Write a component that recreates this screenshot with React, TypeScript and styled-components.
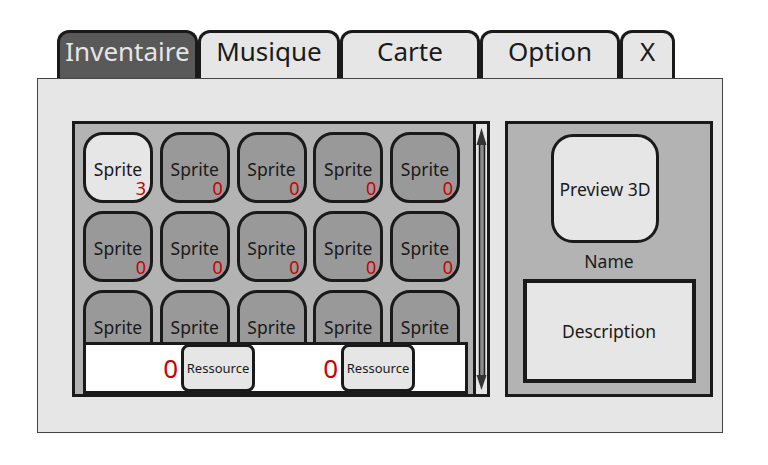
import styled, { createGlobalStyle } from 'styled-components';

const INK = '#1a1a1a';
const LIGHT = '#e6e6e6';
const RED = '#cc0000';

const GlobalStyle = createGlobalStyle`
  html, body {
    margin: 0;
    padding: 0;
    background: #ffffff;
    font-family: "Noto Sans", "Open Sans", sans-serif;
    color: ${INK};
  }
`;

const Page = styled.div`
  width: 768px;
  height: 465px;
  padding: 30px 0 0 37px;
  box-sizing: border-box;
`;

const TabBar = styled.div`
  display: flex;
  padding-left: 20px;
  height: 48px;
`;

const Tab = styled.div<{ $active?: boolean; $width: number }>`
  width: ${p => p.$width}px;
  box-sizing: border-box;
  border: 3px solid ${INK};
  border-bottom: none;
  border-radius: 12px 12px 0 0;
  background: ${p => (p.$active ? '#595959' : LIGHT)};
  color: ${p => (p.$active ? LIGHT : INK)};
  font-size: 26px;
  line-height: 30px;
  padding-top: 3px;
  text-align: center;
`;

const Panel = styled.div`
  width: 686px;
  height: 355px;
  box-sizing: border-box;
  border: 1px solid #444;
  background: ${LIGHT};
  padding: 42px 0 0 34px;
  display: flex;
  gap: 15px;
`;

const Inventory = styled.div`
  width: 418px;
  height: 276px;
  box-sizing: border-box;
  border: 3px solid ${INK};
  background: #b3b3b3;
  display: flex;
`;

const InventoryMain = styled.div`
  flex: 1;
  display: flex;
  flex-direction: column;
`;

const SpriteGrid = styled.div`
  height: 218px;
  box-sizing: border-box;
  overflow: hidden;
  padding: 8px 0 0 8px;
  display: grid;
  grid-template-columns: repeat(5, 70px);
  grid-auto-rows: 71px;
  column-gap: 6.75px;
  row-gap: 8px;
`;

const SpriteCell = styled.div<{ $selected?: boolean }>`
  box-sizing: border-box;
  border: 3px solid ${INK};
  border-radius: 20px;
  background: ${p => (p.$selected ? LIGHT : '#999999')};
  padding-top: 25px;
  display: flex;
  flex-direction: column;
`;

const SpriteLabel = styled.div`
  font-size: 17.5px;
  line-height: 18px;
  text-align: center;
`;

const SpriteCount = styled.div`
  margin-top: 2px;
  font-size: 18px;
  line-height: 17px;
  text-align: right;
  padding-right: 4px;
  color: ${RED};
`;

const ResourceBar = styled.div`
  height: 52px;
  margin: 0 5px 0 8px;
  box-sizing: border-box;
  border: 3px solid ${INK};
  background: #ffffff;
  padding-left: 9px;
  display: flex;
  align-items: center;
`;

const ResourceGroup = styled.div`
  width: 160px;
  display: flex;
  justify-content: flex-end;
  align-items: center;
  gap: 3px;
`;

const ResourceAmount = styled.span`
  font-size: 26px;
  color: ${RED};
`;

const ResourceButton = styled.div`
  width: 74px;
  height: 48px;
  flex-shrink: 0;
  box-sizing: border-box;
  border: 3px solid ${INK};
  border-radius: 8px;
  background: ${LIGHT};
  font-size: 13px;
  display: flex;
  align-items: center;
  justify-content: center;
`;

const ScrollTrack = styled.div`
  width: 14px;
  box-sizing: border-box;
  border-left: 3px solid ${INK};
  background: ${LIGHT};
  display: flex;
`;

const Details = styled.div`
  width: 208px;
  height: 276px;
  box-sizing: border-box;
  border: 3px solid ${INK};
  background: #b3b3b3;
  display: flex;
  flex-direction: column;
  align-items: center;
  padding-top: 10px;
`;

const Preview = styled.div`
  width: 108px;
  height: 109px;
  margin-right: 8px;
  box-sizing: border-box;
  border: 3px solid ${INK};
  border-radius: 22px;
  background: ${LIGHT};
  font-size: 17.5px;
  display: flex;
  align-items: center;
  justify-content: center;
`;

const ItemName = styled.div`
  margin-top: 8px;
  font-size: 17.5px;
  line-height: 20px;
`;

const Description = styled.div`
  margin-top: 8px;
  width: 173px;
  height: 104px;
  box-sizing: border-box;
  border: 4px solid ${INK};
  background: ${LIGHT};
  font-size: 17.5px;
  display: flex;
  align-items: center;
  justify-content: center;
`;

const tabs = [
  { label: 'Inventaire', width: 141 },
  { label: 'Musique', width: 142 },
  { label: 'Carte', width: 140 },
  { label: 'Option', width: 140 },
  { label: 'X', width: 55 },
];

const sprites = Array.from({ length: 15 }, (_, i) => ({
  count: i === 0 ? 3 : 0,
  showCount: i < 10,
}));

function ScrollArrows() {
  return (
    <svg width="11" height="270" viewBox="0 0 11 270">
      <rect x="3.5" y="18" width="5" height="236" fill="#8c8c8c" stroke={INK} strokeWidth="1.5" />
      <polygon points="5.5,4 0.5,21 10.5,21" fill="#333" />
      <polygon points="5.5,266 0.5,251 10.5,251" fill="#333" />
    </svg>
  );
}

export default function App() {
  return (
    <Page>
      <GlobalStyle />
      <TabBar>
        {tabs.map((t, i) => (
          <Tab key={t.label} $active={i === 0} $width={t.width}>
            {t.label}
          </Tab>
        ))}
      </TabBar>
      <Panel>
        <Inventory>
          <InventoryMain>
            <SpriteGrid>
              {sprites.map((s, i) => (
                <SpriteCell key={i} $selected={i === 0}>
                  <SpriteLabel>Sprite</SpriteLabel>
                  {s.showCount && <SpriteCount>{s.count}</SpriteCount>}
                </SpriteCell>
              ))}
            </SpriteGrid>
            <ResourceBar>
              <ResourceGroup>
                <ResourceAmount>0</ResourceAmount>
                <ResourceButton>Ressource</ResourceButton>
              </ResourceGroup>
              <ResourceGroup>
                <ResourceAmount>0</ResourceAmount>
                <ResourceButton>Ressource</ResourceButton>
              </ResourceGroup>
            </ResourceBar>
          </InventoryMain>
          <ScrollTrack>
            <ScrollArrows />
          </ScrollTrack>
        </Inventory>
        <Details>
          <Preview>Preview 3D</Preview>
          <ItemName>Name</ItemName>
          <Description>Description</Description>
        </Details>
      </Panel>
    </Page>
  );
}
